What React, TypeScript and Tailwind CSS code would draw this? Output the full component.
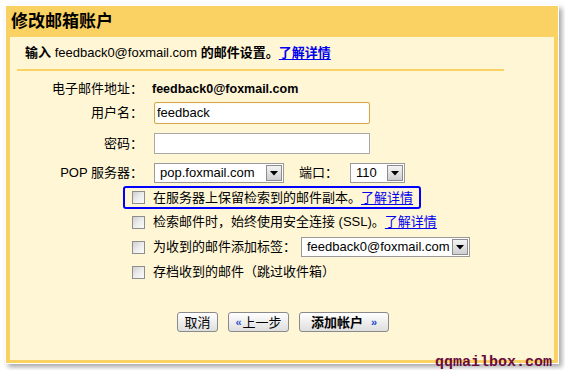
import React from "react";

function Caret() {
  return (
    <span className="flex h-full w-[16px] items-center justify-center border border-[#8d8d8d] bg-gradient-to-b from-[#f4f4f4] to-[#cfcfcf]">
      <svg width="8" height="5" viewBox="0 0 8 5">
        <path d="M0 0 H8 L4 4.5 Z" fill="#000" />
      </svg>
    </span>
  );
}

function Select({ value, w, textPl }: { value: string; w: string; textPl: string }) {
  return (
    <div className={`flex h-[20px] ${w} items-stretch border border-[#9a9a9a] bg-white p-[1px]`}>
      <span className={`flex-1 whitespace-nowrap ${textPl} text-[13px] leading-[16px] text-black`}>{value}</span>
      <Caret />
    </div>
  );
}

function Box() {
  return (
    <span className="block h-[13px] w-[13px] shrink-0 border border-[#8e8e8e] bg-gradient-to-br from-[#cfcfcf] via-[#ececec] to-[#fbfbfb]" />
  );
}

function Link({ children }: { children: React.ReactNode }) {
  return <span className="text-[#0000ee] underline underline-offset-[2px]">{children}</span>;
}

export default function App() {
  return (
    <div className="relative h-[370px] w-[565px] overflow-hidden bg-white font-[Liberation_Sans,Arial,Noto_Sans_CJK_SC,sans-serif] text-black">
      <div className="ml-[5px] mt-[5px] flex h-[359px] w-[554px] flex-col border border-white bg-[#fad163] px-[4px] pb-[3px] shadow-[3px_3px_5px_rgba(0,0,0,0.35)]">
        <div className="flex h-[31px] items-center pl-[1px]">
          <span className="text-[17px] font-bold leading-[20px]">修改邮箱账户</span>
        </div>
        <div className="flex-1 bg-[#fff6d6] pl-[7px]">
          <div className="w-[487px]">
            <div className="whitespace-nowrap pl-[8px] pt-[8px] text-[13px] leading-[16px]">
              <span className="font-bold">输入 </span>
              <span className="font-medium">feedback0@foxmail.com</span>
              <span className="font-bold"> 的邮件设置。</span>
              <span className="font-bold">
                <Link>了解详情</Link>
              </span>
            </div>
            <div className="mt-[8px] h-[2px] bg-[#fad163]" />

            <div className="flex flex-col text-[13px]">
              <div className="mt-[9px] flex h-[18px] items-center">
                <span className="w-[126px] text-right">电子邮件地址：</span>
                <span className="ml-[9px] text-[12.5px] font-bold">feedback0@foxmail.com</span>
              </div>

              <div className="mt-[4px] flex h-[22px] items-center">
                <span className="w-[126px] text-right">用户名：</span>
                <div className="ml-[11px] flex h-[22px] w-[216px] items-center rounded-[2px] border border-[#d6a548] bg-white pl-[2px] shadow-[inset_0_0_1px_#f2d28a]">
                  feedback
                </div>
              </div>

              <div className="mt-[9px] flex h-[21px] items-center">
                <span className="w-[126px] text-right">密码：</span>
                <div className="ml-[11px] h-[21px] w-[216px] border border-[#a9a9a9] bg-white" />
              </div>

              <div className="mt-[9px] flex h-[20px] items-center">
                <span className="w-[126px] text-right">POP 服务器：</span>
                <div className="ml-[11px]">
                  <Select value="pop.foxmail.com" w="w-[130px]" textPl="pl-[4px]" />
                </div>
                <span className="ml-[15px]">端口：</span>
                <div className="ml-[12px]">
                  <Select value="110" w="w-[55px]" textPl="pl-[4px]" />
                </div>
              </div>

              <div className="ml-[106px] mt-[3px] flex h-[23px] w-[298px] items-center gap-[8px] rounded-[3px] border-2 border-[#0000ff] pl-[7px]">
                <Box />
                <span className="whitespace-nowrap">
                  在服务器上保留检索到的邮件副本。<Link>了解详情</Link>
                </span>
              </div>

              <div className="ml-[106px] mt-[2px] flex h-[22px] items-center gap-[8px] border-2 border-transparent pl-[7px]">
                <Box />
                <span className="whitespace-nowrap">
                  检索邮件时，始终使用安全连接 (SSL)。<Link>了解详情</Link>
                </span>
              </div>

              <div className="ml-[106px] mt-[4px] flex h-[20px] items-center gap-[8px] border-2 border-transparent pl-[7px]">
                <Box />
                <span className="w-[140px] whitespace-nowrap">为收到的邮件添加标签：</span>
                <Select value="feedback0@foxmail.com" w="w-[169px]" textPl="pl-[4px]" />
              </div>

              <div className="ml-[106px] mt-[5px] flex h-[20px] items-center gap-[8px] border-2 border-transparent pl-[7px]">
                <Box />
                <span className="whitespace-nowrap">存档收到的邮件（跳过收件箱）</span>
              </div>

              <div className="ml-[160px] mt-[30px] flex h-[20px] gap-[10px]">
                <button className="flex h-[20px] w-[41px] items-center justify-center rounded-[3px] border border-[#8a8a8a] bg-gradient-to-b from-white to-[#dedede] text-[13px] leading-none">
                  取消
                </button>
                <button className="flex h-[20px] w-[61px] items-center justify-center rounded-[3px] border border-[#8a8a8a] bg-gradient-to-b from-white to-[#dedede] text-[13px] leading-none">
                  <span className="mr-[1px] text-[11px] font-bold text-[#3355cc]">«</span>上一步
                </button>
                <button className="flex h-[20px] w-[90px] items-center justify-center rounded-[3px] border border-[#8a8a8a] bg-gradient-to-b from-white to-[#dedede] text-[13px] font-bold leading-none">
                  添加帐户<span className="ml-[8px] text-[11px] text-[#2244cc]">»</span>
                </button>
              </div>
            </div>
          </div>
        </div>
      </div>
      <div className="absolute left-[435px] top-[355px] font-[Liberation_Mono,monospace] text-[15px] font-bold leading-[15px] text-[#6a0b3c]">
        qqmailbox.com
      </div>
    </div>
  );
}
